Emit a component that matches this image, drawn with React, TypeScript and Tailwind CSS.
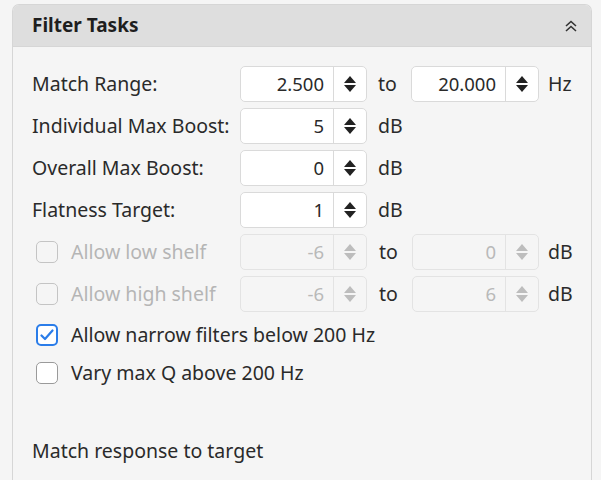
import React from "react";

const font = { fontFamily: '"Noto Sans", "Open Sans", sans-serif' };

function Spin({ disabled }: { disabled?: boolean }) {
  const c = disabled ? "#bdbdbd" : "#222222";
  return (
    <svg width="14" height="18" viewBox="0 0 14 18">
      <path d="M7 1 L13 8 L1 8 Z" fill={c} />
      <path d="M7 17 L13 10 L1 10 Z" fill={c} />
    </svg>
  );
}

function NumInput({ value, disabled, w = 127 }: { value: string; disabled?: boolean; w?: number }) {
  return (
    <div
      className={`flex h-[36px] rounded-[5px] border ${
        disabled ? "border-[#e3e3e3] bg-[#f5f5f5]" : "border-[#dadada] bg-white"
      }`}
      style={{ width: w }}
    >
      <div
        className={`flex flex-1 items-center justify-end pr-[9px] text-[18.5px] ${
          disabled ? "text-[#b9b9b9]" : "text-[#2a2a2a]"
        }`}
      >
        {value}
      </div>
      <div
        className={`flex w-[33px] items-center justify-center border-l ${
          disabled ? "border-[#e3e3e3]" : "border-[#dadada]"
        }`}
      >
        <Spin disabled={disabled} />
      </div>
    </div>
  );
}

function Check({ checked, disabled }: { checked?: boolean; disabled?: boolean }) {
  if (checked) {
    return (
      <div className="flex h-[22px] w-[22px] shrink-0 items-center justify-center rounded-[5px] border-2 border-[#2b7de9] bg-white">
        <svg width="14" height="12" viewBox="0 0 14 12">
          <path d="M1.5 6.5 L5 10 L12.5 1.5" fill="none" stroke="#2b7de9" strokeWidth="2.2" strokeLinecap="round" strokeLinejoin="round" />
        </svg>
      </div>
    );
  }
  return (
    <div
      className={`h-[22px] w-[22px] shrink-0 rounded-[5px] border-[1.5px] ${
        disabled ? "border-[#c4c4c4] bg-[#f5f5f5]" : "border-[#9a9a9a] bg-white"
      }`}
    />
  );
}

export default function App() {
  return (
    <div className="min-h-[480px] w-[601px] bg-[#f5f5f5] pt-[4px]" style={font}>
      <div className="ml-[12px] w-[580px] rounded-t-[7px] border border-b-0 border-[#d6d6d6] h-[476px] overflow-hidden">
        <div className="flex h-[42px] items-center justify-between border-b border-[#d6d6d6] bg-[#dedede] pl-[19px] pr-[12px]">
          <span className="text-[19px] font-bold text-[#1e1e1e]">Filter Tasks</span>
          <svg width="16" height="16" viewBox="0 0 16 16">
            <path d="M3 8 L8 3.5 L13 8" fill="none" stroke="#333" strokeWidth="1.6" />
            <path d="M3 13 L8 8.5 L13 13" fill="none" stroke="#333" strokeWidth="1.6" />
          </svg>
        </div>
        <div className="flex flex-col gap-[6px] bg-[#f5f5f5] pl-[19px] pt-[18px] text-[19.5px] text-[#2a2a2a]">
          <div className="flex h-[37px] items-center">
            <span className="w-[208px]">Match Range:</span>
            <NumInput value="2.500" />
            <span className="w-[44px] pl-[11px]">to</span>
            <NumInput value="20.000" w={128} />
            <span className="pl-[9px]">Hz</span>
          </div>
          <div className="flex h-[36px] items-center">
            <span className="w-[208px]">Individual Max Boost:</span>
            <NumInput value="5" />
            <span className="pl-[11px]">dB</span>
          </div>
          <div className="flex h-[36px] items-center">
            <span className="w-[208px]">Overall Max Boost:</span>
            <NumInput value="0" />
            <span className="pl-[11px]">dB</span>
          </div>
          <div className="flex h-[36px] items-center">
            <span className="w-[208px]">Flatness Target:</span>
            <NumInput value="1" />
            <span className="pl-[11px]">dB</span>
          </div>
          <div className="flex h-[36px] items-center">
            <div className="flex w-[208px] items-center gap-[13px] pl-[4px] text-[#b5b5b5]">
              <Check disabled />
              <span>Allow low shelf</span>
            </div>
            <NumInput value="-6" disabled />
            <span className="w-[45px] pl-[12px]">to</span>
            <NumInput value="0" disabled />
            <span className="pl-[9px]">dB</span>
          </div>
          <div className="flex h-[36px] items-center">
            <div className="flex w-[208px] items-center gap-[13px] pl-[4px] text-[#b5b5b5]">
              <Check disabled />
              <span>Allow high shelf</span>
            </div>
            <NumInput value="-6" disabled />
            <span className="w-[45px] pl-[12px]">to</span>
            <NumInput value="6" disabled />
            <span className="pl-[9px]">dB</span>
          </div>
          <div className="flex h-[34px] items-center gap-[13px] pl-[4px]">
            <Check checked />
            <span>Allow narrow filters below 200 Hz</span>
          </div>
          <div className="-mt-[2px] flex h-[34px] items-center gap-[13px] pl-[4px]">
            <Check />
            <span>Vary max Q above 200 Hz</span>
          </div>
          <div className="mt-[42px] flex h-[26px] items-center">
            <span>Match response to target</span>
          </div>
        </div>
      </div>
    </div>
  );
}
